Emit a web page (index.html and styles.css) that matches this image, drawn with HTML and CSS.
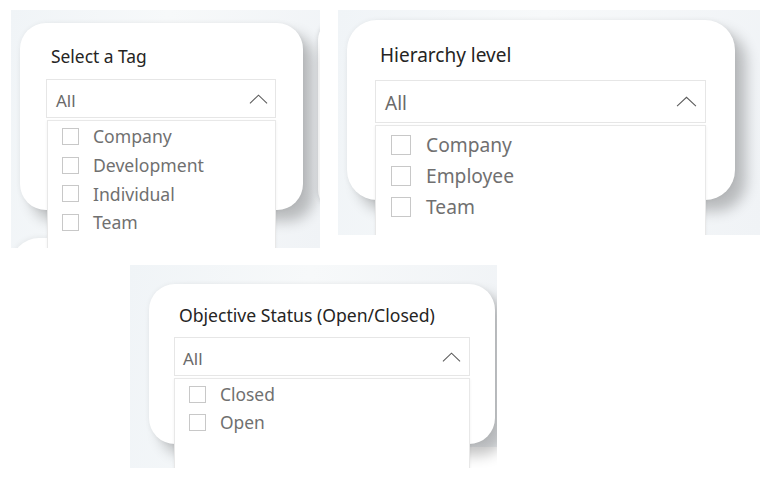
FILE: index.html
```html
<!DOCTYPE html>
<html lang="en">
<head>
<meta charset="utf-8">
<title>Slicers</title>
<link rel="stylesheet" href="styles.css">
</head>
<body>
<main class="canvas">
  <div class="row row-top">
    <section class="panel p1">
      <div class="card">
        <h2 class="title">Select a Tag</h2>
        <div class="dd">
          <div class="dd-head"><span>All</span>
            <svg class="chev" viewBox="0 0 20 10"><path d="M1 9.5 L10 1 L19 9.5" fill="none" stroke="#5a5a5a" stroke-width="1.1"/></svg>
          </div>
          <ul class="dd-list">
            <li><span class="cb"></span>Company</li>
            <li><span class="cb"></span>Development</li>
            <li><span class="cb"></span>Individual</li>
            <li><span class="cb"></span>Team</li>
          </ul>
        </div>
      </div>
      <div class="next-card"></div>
      <div class="side-card"></div>
    </section>
    <section class="panel p2">
      <div class="card">
        <h2 class="title">Hierarchy level</h2>
        <div class="dd">
          <div class="dd-head"><span>All</span>
            <svg class="chev" viewBox="0 0 20 10"><path d="M1 9.5 L10 1 L19 9.5" fill="none" stroke="#5a5a5a" stroke-width="1"/></svg>
          </div>
          <ul class="dd-list">
            <li><span class="cb"></span>Company</li>
            <li><span class="cb"></span>Employee</li>
            <li><span class="cb"></span>Team</li>
          </ul>
        </div>
      </div>
    </section>
  </div>
  <div class="row row-bottom">
    <section class="panel p3">
      <div class="card">
        <h2 class="title">Objective Status (Open/Closed)</h2>
        <div class="dd">
          <div class="dd-head"><span>All</span>
            <svg class="chev" viewBox="0 0 20 10"><path d="M1 9.5 L10 1 L19 9.5" fill="none" stroke="#5a5a5a" stroke-width="1.1"/></svg>
          </div>
          <ul class="dd-list">
            <li><span class="cb"></span>Closed</li>
            <li><span class="cb"></span>Open</li>
          </ul>
        </div>
      </div>
      <div class="corner-box"></div>
    </section>
  </div>
</main>
</body>
</html>
```
FILE: styles.css
```css
* { box-sizing: border-box; }
html, body { margin: 0; padding: 0; background: #ffffff; }
body { width: 766px; height: 480px; overflow: hidden; font-family: "Noto Sans", "Open Sans", "DejaVu Sans", sans-serif; }

.canvas { padding: 10px 0 0 11px; }
.row { display: flex; }
.row-top { gap: 18px; }
.row-bottom { margin-top: 17px; padding-left: 119px; }

.panel {
  position: relative;
  overflow: hidden;
  background: linear-gradient(100deg, #f0f4f7 0%, #f7f9fa 45%, #f0f3f6 100%);
}
.card {
  position: relative;
  z-index: 1;
  background: #ffffff;
  box-shadow: 11px 11px 14px rgba(0,0,0,0.24), 0 0 5px rgba(0,0,0,0.06);
}
.title {
  margin: 0;
  font-weight: 400;
  color: #252423;
  white-space: nowrap;
}
.dd-head {
  display: flex;
  align-items: center;
  justify-content: space-between;
  background: #fff;
  border: 1px solid #e6e6e6;
  color: #6a6a6a;
}
.dd-head span { padding-top: 3px; }
.chev { display: block; }
.dd-list {
  list-style: none;
  margin: 0;
  background: #fff;
  border: 1px solid #e8e8e8;
  border-bottom: none;
  box-shadow: 0 1px 3px rgba(0,0,0,0.06);
}
.dd-list li {
  display: flex;
  align-items: center;
  color: #707070;
  white-space: nowrap;
}
.cb {
  flex: none;
  border: 1px solid #c8c8c8;
  background: #fff;
}

/* Panel 1 */
.p1 { width: 309px; height: 238px; padding: 13px 0 0 9px; }
.p1 .card { width: 283px; height: 187px; border-radius: 26px; padding: 23px 0 0 26px; }
.p1 .title { font-size: 17.4px; line-height: 20px; padding-left: 5px; }
.p1 .dd { margin-top: 13px; width: 230px; }
.p1 .dd-head { height: 39px; padding: 0 7px 0 9px; font-size: 17px; }
.p1 .chev { width: 19px; height: 10px; }
.p1 .dd-list { margin: 2px 0 0 1px; height: 140px; padding: 1px 0 0 14px; }
.p1 .dd-list li { height: 28.7px; font-size: 17.6px; }
.p1 .cb { width: 17px; height: 17px; margin-right: 14px; }
.p1 .next-card {
  position: absolute;
  left: 0; top: 228px;
  width: 120px; height: 60px;
  border-radius: 28px;
  background: #fff;
  box-shadow: 0 0 6px rgba(0,0,0,0.08);
}
.p1 .side-card {
  position: absolute;
  left: 307px; top: 10px;
  width: 40px; height: 190px;
  border-radius: 20px;
  background: #fff;
  box-shadow: 0 0 5px rgba(0,0,0,0.15);
}

/* Panel 2 */
.p2 { width: 422px; height: 225px; padding: 10px 0 0 9px; }
.p2 .card { width: 388px; height: 180px; border-radius: 30px; padding: 24px 0 0 28px; }
.p2 .title { font-size: 19px; line-height: 23px; padding-left: 5px; }
.p2 .dd { margin-top: 13px; width: 331px; }
.p2 .dd-head { height: 43px; padding: 0 8px 0 9px; font-size: 19px; }
.p2 .chev { width: 21px; height: 11px; }
.p2 .dd-list { margin: 2px 0 0 0; height: 130px; padding: 3px 0 0 15px; }
.p2 .dd-list li { height: 31px; font-size: 19.2px; }
.p2 .cb { width: 20px; height: 20px; margin-right: 15px; }

/* Panel 3 */
.p3 { width: 367px; height: 203px; padding: 19px 0 0 19px; }
.p3 .card { width: 346px; height: 160px; border-radius: 26px; padding: 21px 0 0 25px; }
.p3 .title { font-size: 17.6px; line-height: 20px; padding-left: 5px; }
.p3 .dd { margin-top: 12px; width: 296px; }
.p3 .dd-head { height: 39px; padding: 0 8px 0 8px; font-size: 17px; }
.p3 .chev { width: 19px; height: 10px; }
.p3 .dd-list { margin: 2px 0 0 0; height: 110px; padding: 1px 0 0 14px; }
.p3 .dd-list li { height: 28px; font-size: 17.4px; }
.p3 .cb { width: 17px; height: 17px; margin-right: 14px; }
.p3 .corner-box {
  position: absolute;
  left: 340px; top: 182px;
  width: 27px; height: 21px;
  background: #fff;
}
```
